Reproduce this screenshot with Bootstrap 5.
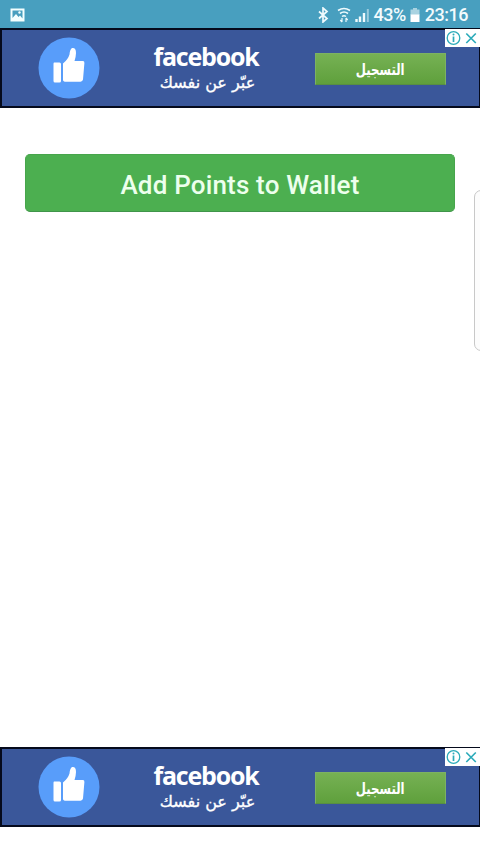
<!DOCTYPE html>
<html lang="en">
<head>
<meta charset="utf-8">
<meta name="viewport" content="width=device-width, initial-scale=1">
<title>Add Points to Wallet</title>
<link href="https://cdn.jsdelivr.net/npm/bootstrap@5.3.0/dist/css/bootstrap.min.css" rel="stylesheet">
<style>
body{font-family:Roboto,"Liberation Sans",sans-serif;height:852px;overflow:hidden;background:#fff}
svg{display:block;flex:none}
.status-bar{height:28px;background:#489fbf;color:#f2fbfd;font-size:18px;line-height:26px;padding:1px 12px 0 10px;font-weight:500}
.status-bar span{padding-top:1px}
.status-bar .pct{margin-left:5px;letter-spacing:-.5px}
.status-bar .clock{margin-left:5px;letter-spacing:-.5px}
.ad-banner{height:80px;background:#3a579a;border:2px solid #050a1c;border-right-width:1px;padding-left:36px}
.ad-copy{width:106px;margin-left:53px;color:#fff;padding-top:3px}
.ad-brand{font:700 25px/27px "Open Sans",sans-serif;letter-spacing:-1.200px;white-space:nowrap}
.ad-tag{font:16px/26px "DejaVu Sans",sans-serif;white-space:nowrap;padding-left:3px;-webkit-text-stroke:.35px #fff}
.ad-cta{width:131px;height:32px;margin-left:56px;margin-top:1px;background:linear-gradient(#76b154,#5fa03c);border:1px solid #7db262;border-bottom-color:#588f43;border-radius:0;color:#fff;font:700 14px/31px "DejaVu Sans Condensed","DejaVu Sans",sans-serif;padding:0}
.ad-cta span{display:inline-block;transform:scale(.93,1.150)}
.ad-choices{width:35px;height:18px;background:#fff;right:-1px;top:-1px}
.wallet-btn,.wallet-btn:hover{height:58px;margin:46px 25px 0;background:#4caf50;color:#edffed;border:1px solid #47a54c;border-bottom-color:#40954a;border-radius:5px;font-size:26px;font-weight:500;padding:1px 0 0;line-height:59px;letter-spacing:.17px}
.edge-panel{right:-8px;top:190px;width:14px;height:161px;border:1px solid #c8c8c8;border-radius:8px;background:#fcfcfc}
.bottom-ad{margin-bottom:25px}
</style>
</head>
<body class="d-flex flex-column position-relative">
<svg class="d-none">
  <symbol id="thumb" viewBox="0 0 62 62"><circle cx="31" cy="31" r="30.5" fill="#589dfa"/><path d="M16 25.500h5.500q1.500 0 1.500 1.500v17q0 1.500-1.500 1.500H17q-1.500 0-1.500-1.500V27q0-1.500.5-1.500zM25 26.500q5-4 6.500-9 .3-5 2.500-6.500 4-.8 4 5-.1 4-1.500 8H45q1.500 0 1.400 2L45 42.500q-.4 2-2.500 2.200H28q-3 0-3-2z" fill="#fff"/></symbol>
  <symbol id="choices" viewBox="0 0 35 18"><g fill="none" stroke="#2cabba"><circle cx="8.500" cy="9" r="6.300" stroke-width="1.300"/><path d="M8.500 7.500v5.500" stroke-width="1.700"/><path d="M21.300 4.500l9.500 9.500M30.800 4.500L21.300 14" stroke-width="1.700"/></g><circle cx="8.500" cy="5.400" r="1" fill="#2cabba"/></symbol>
</svg>

<header class="status-bar d-flex align-items-center">
  <svg width="15" height="14" viewBox="0 0 15 14"><path d="M.5.500h14v13H.5z" fill="#f4ffff"/><path d="M2.500 2.500h10v8L10 7.500 8.500 9 6 6l-3.500 4z" fill="#489fbf"/><circle cx="9.500" cy="4.500" r="1.200" fill="#f4ffff"/></svg>
  <svg class="ms-auto" width="52" height="16" viewBox="0 0 52 16" fill="none" stroke="#eefafd">
    <path d="M2 4.500l8 7-4 3.500V1l4 3.500-8 7" stroke-width="1.700"/>
    <path d="M21 3.500q6-4 12 0M23 6.500q4-3 8 0" stroke-width="1.600"/><path d="M25 9.500q2-1.500 4 0" stroke-width="1.500"/><path d="M25 11v4m-1.700-2L25 15M29 15v-4m0 0l1.700 2" stroke-width="1.200"/>
    <path d="M39.500 12v3M43 9.500V15M47 6v9" stroke-width="2.400"/><path d="M50.800 2v13" stroke-width="2" opacity=".5"/>
  </svg>
  <span class="pct">43%</span>
  <svg class="ms-1" width="10" height="14" viewBox="0 0 10 14"><path d="M3 0h4v1.500h2.500V7H.5V1.500H3z" fill="#a9d3e1"/><path d="M.5 6.500h9V14h-9z" fill="#fff"/></svg>
  <span class="clock">23:16</span>
</header>

<section class="ad-banner d-flex align-items-center position-relative">
  <svg width="62" height="62"><use href="#thumb"/></svg>
  <div class="ad-copy text-center"><div class="ad-brand">facebook</div><div class="ad-tag" dir="rtl" lang="ar">عبّر عن نفسك</div></div>
  <button class="btn ad-cta" lang="ar"><span>التسجيل</span></button>
  <div class="ad-choices position-absolute"><svg width="35" height="18"><use href="#choices"/></svg></div>
</section>

<main class="flex-grow-1 d-flex flex-column"><button class="btn wallet-btn">Add Points to Wallet</button></main>
<div class="edge-panel position-absolute"></div>

<section class="ad-banner bottom-ad d-flex align-items-center position-relative">
  <svg width="62" height="62"><use href="#thumb"/></svg>
  <div class="ad-copy text-center"><div class="ad-brand">facebook</div><div class="ad-tag" dir="rtl" lang="ar">عبّر عن نفسك</div></div>
  <button class="btn ad-cta" lang="ar"><span>التسجيل</span></button>
  <div class="ad-choices position-absolute"><svg width="35" height="18"><use href="#choices"/></svg></div>
</section>
<script src="https://cdn.jsdelivr.net/npm/bootstrap@5.3.0/dist/js/bootstrap.bundle.min.js"></script>
</body>
</html>
